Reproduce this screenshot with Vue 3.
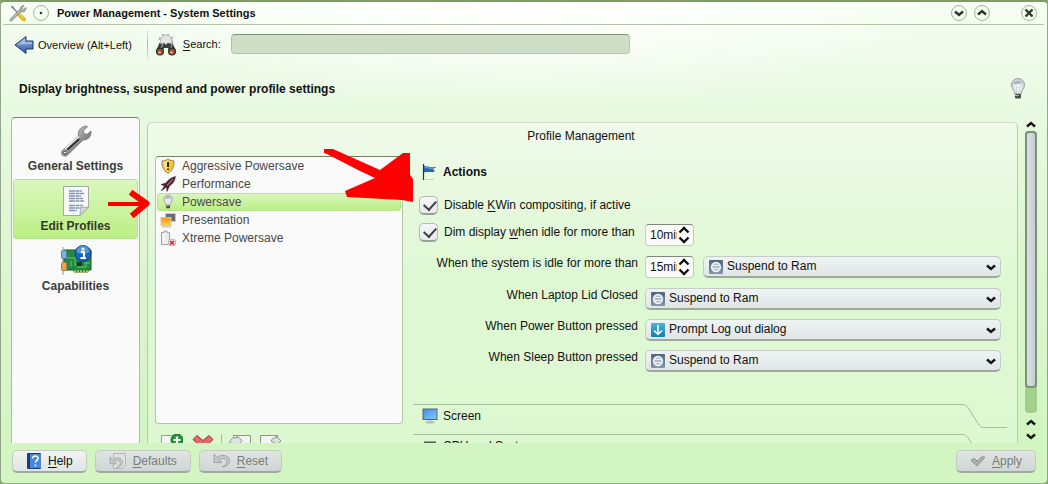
<script setup>
import { ref } from 'vue'

const search = ref('')
const pages = [
  { id: 'general', label: 'General Settings' },
  { id: 'profiles', label: 'Edit Profiles' },
  { id: 'caps', label: 'Capabilities' },
]
const page = ref('profiles')

const profiles = [
  { id: 'shield', label: 'Aggressive Powersave' },
  { id: 'rocket', label: 'Performance' },
  { id: 'bulb', label: 'Powersave' },
  { id: 'slides', label: 'Presentation' },
  { id: 'battery', label: 'Xtreme Powersave' },
]
const profile = ref('bulb')

const disableCompositing = ref(true)
const dimDisplay = ref(true)
const dimAfter = ref('10min')
const idleAfter = ref('15min')
const idleAction = ref('Suspend to Ram')
const actions = ['Suspend to Ram', 'Prompt Log out dialog', 'Do nothing']
const events = ref([
  { id: 'lid', label: 'When Laptop Lid Closed', action: 'Suspend to Ram' },
  { id: 'power', label: 'When Power Button pressed', action: 'Prompt Log out dialog' },
  { id: 'sleep', label: 'When Sleep Button pressed', action: 'Suspend to Ram' },
])
</script>

<template>
  <div class="window">
    <svg class="defs" width="0" height="0" aria-hidden="true">
      <defs>
        <linearGradient id="gBlue" x1="0" y1="0" x2="0" y2="1">
          <stop offset="0" stop-color="#9dbdea" /><stop offset="1" stop-color="#2a559f" />
        </linearGradient>
        <linearGradient id="gSteel" x1="0" y1="0" x2="1" y2="1">
          <stop offset="0" stop-color="#f4f4f4" /><stop offset="0.5" stop-color="#9a9a9a" /><stop offset="1" stop-color="#3c3c3c" />
        </linearGradient>
        <linearGradient id="gScreen" x1="0" y1="0" x2="1" y2="1">
          <stop offset="0" stop-color="#3d8fe0" /><stop offset="1" stop-color="#8cc8fb" />
        </linearGradient>
        <radialGradient id="gGlass" cx="0.5" cy="0.6" r="0.6">
          <stop offset="0" stop-color="#ffffff" /><stop offset="1" stop-color="#c3c9ce" />
        </radialGradient>
        <linearGradient id="gSleep" x1="0" y1="0" x2="0" y2="1">
          <stop offset="0" stop-color="#53647c" /><stop offset="1" stop-color="#8598aa" />
        </linearGradient>
        <linearGradient id="gLogout" x1="0" y1="0" x2="0" y2="1">
          <stop offset="0" stop-color="#4fb4d8" /><stop offset="1" stop-color="#0d7faf" />
        </linearGradient>
        <linearGradient id="gOrange" x1="0" y1="0" x2="0" y2="1">
          <stop offset="0" stop-color="#f29a0c" /><stop offset="1" stop-color="#ffcf4d" />
        </linearGradient>
        <symbol id="bulb" viewBox="0 0 16 24">
          <path d="M8 1.500C4 1.500 1.500 4.500 1.500 8c0 3.500 3 5 3.300 9h6.400C11.500 13 14.500 11.500 14.500 8 14.500 4.500 12 1.500 8 1.500z" fill="url(#gGlass)" stroke="#949b9f" stroke-width="0.900" />
          <path d="M3.500 6.500C5 3 11 3 12.500 6.500 10 5.500 6 8 3.500 6.500z" fill="#98a7b3" opacity="0.800" />
          <path d="M6.500 16V10l1.500 1 1.500-1v6" fill="none" stroke="#c4c9cc" stroke-width="0.600" />
          <rect x="5" y="17" width="6" height="4.500" rx="1" fill="#4b4b4b" />
          <path d="M5 18.500h4" stroke="#b8b8b8" />
        </symbol>
        <symbol id="undo" viewBox="0 0 18 16">
          <path d="M1 1v8.500h8L6 6.800c3-2 6.500-1.500 7.500 1 .8 2.200-.8 4.500-4.500 6.200 5-.5 8-3.500 7.500-7C15.800 2.500 9 .5 4 4.500z" fill="#c2c6c6" stroke="#9ca2a2" stroke-width="0.900" />
        </symbol>
        <symbol id="suspend" viewBox="0 0 14 14">
          <rect width="14" height="14" rx="1" fill="url(#gSleep)" />
          <circle cx="7" cy="7" r="4.300" fill="#94a6ba" stroke="#f1f5f8" stroke-width="1.700" />
          <path d="M4 5.500h6M4 8.500h6" stroke="#f1f5f8" stroke-width="1.300" />
        </symbol>
      </defs>
    </svg>

    <header class="titlebar">
      <svg class="app-icon" width="18" height="18" viewBox="0 0 18 18">
        <path d="M3 2.500 14 15" stroke="#8f9492" stroke-width="1.800" />
        <path d="M9 9.500l6 6" stroke="#e5b92d" stroke-width="4" stroke-linecap="round" />
        <path d="M10 9.500l5 5" stroke="#f8df74" stroke-width="1" />
        <path d="M2 16 12 6" stroke="#6c706e" stroke-width="2.800" stroke-linecap="round" />
        <path d="M2 16 12 6" stroke="#cfd3d1" stroke-width="1.200" stroke-linecap="round" />
        <path d="M11 5.500c0-2.500 2-4 4-4l-2 2.500 1.500 1.500 2.500-2c.5 2.500-1.500 4.500-4 4.500z" fill="#b9bdbb" stroke="#727674" stroke-width="0.700" />
        <path d="M1.500 1.500 4 2.500 5 5 3 4z" fill="#777c79" />
      </svg>
      <button class="round" aria-label="Window menu">
        <svg width="16" height="16" viewBox="0 0 16 16"><circle cx="8" cy="8" r="1.300" fill="#33402d" /></svg>
      </button>
      <h1 class="caption">Power Management - System Settings</h1>
      <div class="winbtns">
        <button class="round" aria-label="Minimize">
          <svg width="16" height="16" viewBox="0 0 16 16"><path d="M4 6.500 8 10l4-3.500" class="mark" /></svg>
        </button>
        <button class="round" aria-label="Maximize">
          <svg width="16" height="16" viewBox="0 0 16 16"><path d="M4 9.500 8 6l4 3.500" class="mark" /></svg>
        </button>
        <button class="round close" aria-label="Close">
          <svg width="16" height="16" viewBox="0 0 16 16"><path d="M4.500 4.500l7 7M11.500 4.500l-7 7" class="mark" /></svg>
        </button>
      </div>
    </header>

    <div class="toolbar">
      <button class="overview">
        <svg width="20" height="20" viewBox="0 0 20 20">
          <path d="M1 10 12 1.500V6h7v8h-7v4.500z" fill="url(#gBlue)" stroke="#1d3769" stroke-linejoin="round" />
          <path d="M3 9.700 11 3.500V7h7v2z" fill="#c5d9f5" opacity="0.500" />
        </svg>
        <span>Overview (Alt+Left)</span>
      </button>
      <span class="vsep"></span>
      <svg class="binoculars" width="22" height="22" viewBox="0 0 22 22">
        <circle cx="11" cy="6.500" r="6.500" fill="none" stroke="#b9b9b9" stroke-width="2" stroke-dasharray="2.800 2.300" />
        <circle cx="11" cy="6.500" r="5.500" fill="#e4e4e4" stroke="#b8b8b8" />
        <path d="M1 17 4.500 9h5L11 11l1.500-2h5l3.500 8v2h-6l-2-5h-4l-2 5H1z" fill="#3b3d3e" />
        <path d="M5 9.500h3l-2 5M14 9.500h3l-1 5" stroke="#9b9fa0" stroke-width="1.200" fill="none" />
        <circle cx="5" cy="17.500" r="4" fill="#292929" /><circle cx="17" cy="17.500" r="4" fill="#292929" />
        <circle cx="5" cy="17.700" r="2.900" fill="#a04a28" /><circle cx="17" cy="17.700" r="2.900" fill="#a04a28" />
        <circle cx="4.500" cy="18.300" r="1.400" fill="#dba083" /><circle cx="16.500" cy="18.300" r="1.400" fill="#dba083" />
      </svg>
      <label class="search-label" for="search"><u>S</u>earch:</label>
      <input id="search" v-model="search" class="search" type="text" />
    </div>

    <div class="heading">
      <h2>Display brightness, suspend and power profile settings</h2>
      <svg width="16" height="24"><use href="#bulb" /></svg>
    </div>

    <main class="content">
      <nav class="sidebar">
        <button v-for="p in pages" :key="p.id" class="page" :class="{ active: p.id === page }" @click="page = p.id">
          <svg v-if="p.id === 'general'" width="32" height="34" viewBox="0 0 32 34">
            <path d="M2 27 18.500 12c-1-4 1-8.500 7-10l2 .8-4.200 4 .7 3 3 .5L31 7c.5 5-2.500 9-8 9L7 31.500c-3.500 2-7-1.500-5-4.500z" fill="url(#gSteel)" stroke="#707070" stroke-width="0.800" />
            <path d="M8 25 18.500 15.500" stroke="#303030" stroke-width="2" stroke-linecap="round" />
            <path d="M5 25 19 12.500" stroke="#f7f7f7" stroke-width="1.200" />
            <circle cx="5" cy="28.500" r="1.500" fill="#fafafa" stroke="#444" />
          </svg>
          <svg v-else-if="p.id === 'profiles'" width="32" height="34" viewBox="0 0 32 34">
            <path d="M3.500 2.500h25V23L20 31.500H3.500z" fill="#f7f8fa" stroke="#a4aaa6" />
            <path d="M28.500 23 20 31.500l.5-8z" fill="#d4d8dc" stroke="#8d9398" stroke-width="0.700" />
            <path d="M9 7h13M9 9.500h15M9 12h12M9 14.500h14M9 17h15M9 21.500h14M9 24h11M9 26.500h8" stroke="#8394b2" stroke-width="1.400" stroke-dasharray="6 .6 4 .5" />
          </svg>
          <svg v-else width="32" height="34" viewBox="0 0 32 34">
            <path d="M3 3v28" stroke="#b5bab5" stroke-width="1.500" />
            <path d="M4 6h27v20h-3v2H14v-2H4z" fill="#238a42" stroke="#0f5a26" />
            <path d="M7 14h8v8M17 23h9v-5M24 19h6M11 17v5" stroke="#66c478" fill="none" />
            <path d="M14 27.500h14" stroke="#d9be55" stroke-width="2" stroke-dasharray="2 1" />
            <rect x="17" y="18" width="5" height="4" fill="#123f20" />
            <rect x="1.500" y="6.500" width="5" height="8" rx="1" fill="#74b5e4" stroke="#5c7e98" />
            <rect x="1.500" y="18.500" width="5" height="8" rx="1" fill="#f1a04a" stroke="#a77e52" />
            <circle cx="23" cy="9.500" r="8" fill="#1e66b8" stroke="#0d3f80" />
            <path d="M16.500 8a6.500 6.500 0 0 1 13 0c-4 2.500-9 2.500-13 0z" fill="#81b4e8" opacity="0.600" />
            <circle cx="23" cy="5" r="1.500" fill="#fff" />
            <path d="M21 8h3v6M20.500 14h5.500" stroke="#fff" stroke-width="1.900" fill="none" />
          </svg>
          <span>{{ p.label }}</span>
        </button>
      </nav>

      <section class="panel">
        <h3 class="panel-title">Profile Management</h3>
        <div class="columns">
          <div class="left">
            <ul class="profiles">
              <li v-for="p in profiles" :key="p.id">
                <button class="profile" :class="{ active: p.id === profile }" @click="profile = p.id">
                  <svg v-if="p.id === 'shield'" width="16" height="16" viewBox="0 0 16 16">
                    <path d="M8 1c2 1.300 4 1.800 6 1.800C14.500 9 12 13 8 15.200 4 13 1.500 9 2 2.800 4 2.800 6 2.300 8 1z" fill="#f7c62b" stroke="#8f8b7d" />
                    <path d="M8 2.500C6.500 3.500 5 4 3.500 4 3.500 8.500 5 11.500 8 13.500" fill="#fbe28a" />
                    <path d="M8 4v5M8 10.500V12" stroke="#30290f" stroke-width="2" />
                  </svg>
                  <svg v-else-if="p.id === 'rocket'" width="16" height="16" viewBox="0 0 16 16">
                    <path d="M15.500.5C11 1.500 8 4 6 7L1 8.500 4.500 10 1 15l5.500-4L7 15.500 9.500 10C12.500 8 15 5 15.500.5z" fill="#4c2228" stroke="#341b20" stroke-width="0.500" />
                    <path d="M13 3 7 9.500" stroke="#a7999c" stroke-width="1.100" />
                  </svg>
                  <svg v-else-if="p.id === 'bulb'" width="16" height="16" viewBox="0 0 16 24"><use href="#bulb" width="16" height="24" /></svg>
                  <svg v-else-if="p.id === 'slides'" width="16" height="16" viewBox="0 0 16 16">
                    <rect x="5.500" y="1.500" width="10" height="8" fill="#6a6d70" stroke="#c6c9c9" />
                    <rect x="1" y="5.500" width="10" height="8" fill="url(#gOrange)" stroke="#c9c4b5" />
                    <path d="M2 15h9" stroke="#b9b9b9" />
                  </svg>
                  <svg v-else width="16" height="16" viewBox="0 0 16 16">
                    <path d="M4 2.500V1h3v1.500h2.500v12h-8v-12z" fill="#eceeee" stroke="#9ea3a3" />
                    <path d="M3.500 4v9" stroke="#fff" stroke-width="1.500" />
                    <rect x="8.500" y="9.500" width="7" height="6" rx="1" fill="#eed9d9" stroke="#c8b8b8" />
                    <path d="M10 11l4 3.500M14 11l-4 3.500" stroke="#c9252c" stroke-width="1.600" />
                  </svg>
                  <span>{{ p.label }}</span>
                </button>
              </li>
            </ul>
            <div class="tools">
              <button class="tool" aria-label="New profile">
                <svg width="22" height="22" viewBox="0 0 22 22">
                  <path d="M.5 1.500h19v19H.5z" fill="#f2f5f2" stroke="#969d96" />
                  <circle cx="16" cy="6" r="6" fill="#21983a" stroke="#0c6a20" />
                  <path d="M16 2.500v7M12.500 6h7" stroke="#fff" stroke-width="2.200" />
                </svg>
              </button>
              <button class="tool" aria-label="Delete profile">
                <svg width="22" height="22" viewBox="0 0 22 22">
                  <path d="M5 1.500l6 5 6-5 4 4-6 5.500 6 5.500-4 4-6-5.500-6 5.500-4-4L7 11 1 5.500z" fill="#e06a6a" stroke="#b92424" />
                </svg>
              </button>
              <span class="tsep"></span>
              <button class="tool" aria-label="Import profiles">
                <svg width="22" height="22" viewBox="0 0 22 22">
                  <path d="M4.500 6V1.500h17v19h-17" fill="#f2f5f2" stroke="#8d968d" />
                  <path d="M.5 9C2 4 5 3 8 4V2l5 4.500-3 3.500z" fill="#e0e5e0" stroke="#8d968d" />
                </svg>
              </button>
              <button class="tool" aria-label="Export profiles">
                <svg width="22" height="22" viewBox="0 0 22 22">
                  <path d="M.5 20.500v-19h17v19z" fill="#f2f5f2" stroke="#8d968d" />
                  <path d="M11 7c1-3 3-3 5-3V2l5 5-4 3z" fill="#e0e5e0" stroke="#8d968d" />
                </svg>
              </button>
            </div>
          </div>

          <div class="right">
            <h4 class="section-head">
              <svg width="16" height="18" viewBox="0 0 16 18">
                <path d="M1.500 1v16" stroke="#2b3338" stroke-width="1.200" />
                <path d="M2 3c4 0 6 2 12.500.7L11 6l2 2.500C9 10 6 8 2 9.500z" fill="#2868ae" />
                <path d="M3 4.500c3 0 5 1.200 8 .7" stroke="#7db2e8" fill="none" />
                <path d="M3 16.500h9" stroke="#c4d2be" />
              </svg>
              <span>Actions</span>
            </h4>

            <label class="check">
              <input v-model="disableCompositing" type="checkbox" />
              <span>Disable <u>K</u>Win compositing, if active</span>
            </label>

            <div class="form">
              <label class="check">
                <input v-model="dimDisplay" type="checkbox" />
                <span>Dim display <u>w</u>hen idle for more than</span>
              </label>
              <div class="fields tall">
                <div class="spin">
                  <input v-model="dimAfter" type="text" aria-label="Dim display after" />
                  <svg width="12" height="18" viewBox="0 0 12 18"><path d="M1.500 6.500 6 2l4.500 4.500M1.500 11.500 6 16l4.500-4.500" class="arrow" /></svg>
                </div>
              </div>

              <label class="row-label" for="idle">When the system is idle for more than</label>
              <div class="fields tall">
                <div class="spin">
                  <input id="idle" v-model="idleAfter" type="text" />
                  <svg width="12" height="18" viewBox="0 0 12 18"><path d="M1.500 6.500 6 2l4.500 4.500M1.500 11.500 6 16l4.500-4.500" class="arrow" /></svg>
                </div>
                <div class="combo">
                  <svg class="combo-icon" width="14" height="14"><use href="#suspend" /></svg>
                  <select v-model="idleAction" aria-label="Idle action">
                    <option v-for="a in actions" :key="a">{{ a }}</option>
                  </select>
                  <svg class="combo-arrow" width="10" height="7" viewBox="0 0 10 7"><path d="M1 1.500l4 3.500 4-3.500" class="arrow" /></svg>
                </div>
              </div>

              <template v-for="e in events" :key="e.id">
                <label class="row-label" :for="e.id">{{ e.label }}</label>
                <div class="fields">
                  <div class="combo">
                    <svg v-if="e.action === 'Prompt Log out dialog'" class="combo-icon" width="14" height="14" viewBox="0 0 14 14">
                      <rect width="14" height="14" rx="1" fill="url(#gLogout)" />
                      <path d="M7 2v9M3 7.500l4 4 4-4" fill="none" stroke="#fff" stroke-width="1.500" />
                    </svg>
                    <svg v-else class="combo-icon" width="14" height="14"><use href="#suspend" /></svg>
                    <select :id="e.id" v-model="e.action">
                      <option v-for="a in actions" :key="a">{{ a }}</option>
                    </select>
                    <svg class="combo-arrow" width="10" height="7" viewBox="0 0 10 7"><path d="M1 1.500l4 3.500 4-3.500" class="arrow" /></svg>
                  </div>
                </div>
              </template>
            </div>

            <div class="tabs">
              <button class="tab">
                <span class="tab-face">
                  <svg width="16" height="16" viewBox="0 0 16 16">
                    <rect x="1" y="1" width="14" height="10.500" fill="url(#gScreen)" stroke="#566475" />
                    <path d="M6 12h4v1.500H6z" fill="#c9cdd0" /><ellipse cx="8" cy="14.300" rx="5" ry="1.300" fill="#b9bec1" />
                  </svg>
                  <span>Screen</span>
                </span>
                <svg class="tab-edge" width="52" height="30" viewBox="0 0 52 30"><path d="M0 .5h7c3 0 4.500 1 6 3l10 16c2 3 3 4 6 4h23" /></svg>
              </button>
              <button class="tab">
                <span class="tab-face">
                  <svg width="16" height="16" viewBox="0 0 16 16">
                    <rect x="2.500" y="4" width="11" height="10" fill="#6f7774" stroke="#454d49" />
                    <rect x="5" y="7" width="6" height="4" fill="#aab2ae" />
                  </svg>
                  <span>CPU and System</span>
                </span>
                <svg class="tab-edge" width="52" height="30" viewBox="0 0 52 30"><path d="M0 .5h7c3 0 4.500 1 6 3l10 16c2 3 3 4 6 4h23" /></svg>
              </button>
            </div>
          </div>
        </div>
      </section>

      <div class="scroll">
        <button class="step" aria-label="Scroll up"><svg width="10" height="7" viewBox="0 0 10 7"><path d="M1 5.500 5 2l4 3.500" class="arrow" /></svg></button>
        <div class="groove"><div class="thumb"></div></div>
        <button class="step low" aria-label="Scroll up one line"><svg width="10" height="7" viewBox="0 0 10 7"><path d="M1 5.500 5 2l4 3.500" class="arrow" /></svg></button>
        <button class="step" aria-label="Scroll down"><svg width="10" height="7" viewBox="0 0 10 7"><path d="M1 1.500 5 5l4-3.500" class="arrow" /></svg></button>
      </div>
    </main>

    <footer class="footer">
      <button class="btn">
        <svg width="16" height="16" viewBox="0 0 16 16">
          <rect x="1" y="0" width="14" height="16" rx="1" fill="#1c3c72" />
          <rect x="4" y="1" width="11" height="14" fill="#4b87d9" />
          <path d="M6.500 5.500c0-3.500 6-3 5.500 0-.2 1.800-2.500 2-2.500 4M9.500 11.500v1.700" fill="none" stroke="#fff" stroke-width="1.600" />
        </svg>
        <span><u>H</u>elp</span>
      </button>
      <button class="btn" disabled>
        <svg width="18" height="16" viewBox="0 0 18 16">
          <path d="M4.500.5h12v11l-3.500 4H4.500z" fill="#dde1e0" stroke="#b2b7b6" />
          <svg y="3" width="15" height="13"><use href="#undo" /></svg>
        </svg>
        <span><u>D</u>efaults</span>
      </button>
      <button class="btn" disabled>
        <svg width="18" height="16"><use href="#undo" /></svg>
        <span><u>R</u>eset</span>
      </button>
      <button class="btn apply" disabled>
        <svg width="16" height="12" viewBox="0 0 16 12">
          <path d="M1 5.500 4 3l3 3 6-5 2 1.500L7 11z" fill="#a9afad" stroke="#6f7574" stroke-dasharray="1 0.700" />
        </svg>
        <span><u>A</u>pply</span>
      </button>
    </footer>

    <svg class="pointer small" width="46" height="28" viewBox="0 0 46 28" aria-hidden="true">
      <path d="M1 14h38" stroke="#f00" stroke-width="4" />
      <path d="M26 4 39.500 13.500 27 24" fill="none" stroke="#f00" stroke-width="6" stroke-linecap="square" stroke-linejoin="round" />
    </svg>
    <svg class="pointer large" width="92" height="56" viewBox="0 0 92 56" aria-hidden="true">
      <path d="M0 0h9L56 21 79 4h7v22l3 4v23L78 51 23 48l-2-6 30-13L36 22 3 5 0 4z" fill="#f00" />
    </svg>
  </div>
</template>

<style>
body {
  margin: 0;
  background: #86a86c;
}
</style>

<style scoped>
* {
  box-sizing: border-box;
}
.window {
  position: relative;
  display: flex;
  flex-direction: column;
  height: 100vh;
  padding: 0 3px 0 2px;
  border: 1px solid #93a58b;
  border-top: 2px solid #7c9c62;
  border-bottom-color: #8fb07f;
  border-radius: 5px;
  background:
    radial-gradient(ellipse 420px 100px at 50% 0, #ffffff, #ffffff00),
    linear-gradient(#f7fef4, #e8f9e1 110px, #def7d2 230px, #d7f5c9 360px, #d2f5c1 440px);
  font: 12px/14px "Liberation Sans", Arial, sans-serif;
  color: #111;
}
.defs {
  position: absolute;
}
h1, h2, h3, h4, ul {
  margin: 0;
  padding: 0;
  list-style: none;
  font-size: 12px;
}
button {
  margin: 0;
  padding: 0;
  border: 0;
  background: none;
  color: inherit;
  font: inherit;
}
svg {
  flex: none;
  display: block;
}
u {
  text-underline-offset: 2px;
}
.mark, .arrow {
  fill: none;
  stroke: #2b3a25;
  stroke-width: 2.4;
}
.arrow {
  stroke: #111;
}
.titlebar {
  display: flex;
  align-items: center;
  height: 23px;
  padding: 0 7px 0 6px;
  border-bottom: 1px solid #b5c4a9;
}
.caption {
  margin-left: 8px;
  font-size: 11px;
}
.round {
  width: 16px;
  height: 16px;
  border: 1px solid #a4b59b;
  border-radius: 8px;
  background: #f4fbf0;
}
.round svg {
  margin: -1px;
}
.app-icon {
  margin-right: 6px;
}
.winbtns {
  display: flex;
  gap: 7px;
  margin-left: auto;
}
.close {
  margin-left: 24px;
}
.toolbar {
  display: flex;
  align-items: center;
  height: 40px;
  padding: 0 11px;
  font-size: 11px;
}
.overview {
  display: flex;
  align-items: center;
  gap: 4px;
}
.vsep {
  width: 1px;
  height: 30px;
  margin: 0 7px 0 15px;
  background: linear-gradient(#dfeadb, #a9bd9f, #dfeadb);
}
.search-label {
  margin: 0 10px 2px 6px;
}
.search {
  flex: 0 1 399px;
  height: 20px;
  margin-bottom: 3px;
  padding: 0 5px;
  border: 1px solid #b4c6aa;
  border-top: 1px solid #81927a;
  border-radius: 4px;
  background: #cfdfc7;
}
.heading {
  display: flex;
  justify-content: space-between;
  align-items: center;
  height: 52px;
  padding: 0 18px 4px 16px;
}
.content {
  display: flex;
  flex: 1;
  min-height: 0;
  overflow: hidden;
  padding: 0 7px 0 8px;
}
.sidebar {
  flex: none;
  width: 129px;
  padding: 1px;
  border: 1px solid #a9c29c;
  border-top-color: #71856a;
  border-bottom: 0;
  border-radius: 4px 4px 0 0;
  background: #fafafa;
}
.page {
  display: flex;
  flex-direction: column;
  align-items: center;
  width: 100%;
  height: 60px;
  padding-top: 4px;
  border: 1px solid transparent;
  border-radius: 3px;
  font-weight: bold;
  line-height: 16px;
  color: #3c3c3c;
}
.page.active {
  border-color: #b4e58c;
  background: linear-gradient(#daf8be, #bdee85);
  color: #303c26;
}
.panel {
  flex: 1;
  min-width: 0;
  min-height: 440px;
  margin: 5px 7px 0;
  padding: 6px 10px 0 7px;
  border: 1px solid #b5ccab;
  border-top-color: #cfe0c8;
  border-radius: 5px 5px 0 0;
  background: linear-gradient(#f0fbeb, #e5f8dc 90px, #def8d3 160px, #dcf8d0);
}
.panel-title {
  font-weight: normal;
  text-align: center;
}
.columns {
  display: flex;
  gap: 10px;
  margin-top: 13px;
}
.profiles {
  height: 268px;
  padding: 0 1px;
  border: 1px solid #b1c6a7;
  border-top-color: #6f8367;
  border-radius: 4px;
  background: #fafafa;
}
.left {
  flex: none;
  width: 248px;
}
.profile {
  display: flex;
  align-items: center;
  gap: 6px;
  width: 100%;
  height: 18px;
  padding-left: 2px;
  border: 1px solid transparent;
  border-radius: 3px;
  color: #484848;
}
.profile.active {
  border-color: #b5e68d;
  background: linear-gradient(#d9f7bd, #bdee85);
}
.tools {
  display: flex;
  gap: 9px;
  padding: 10px 6px 0;
}
.tsep {
  width: 1px;
  margin: 0 -2px;
  background: #a9bca0;
}
.right {
  flex: 1;
  min-width: 0;
}
.section-head {
  display: flex;
  align-items: center;
  gap: 5px;
  height: 18px;
  margin: 7px 0 15px 9px;
}
.check {
  display: flex;
  align-items: center;
  gap: 6px;
  height: 19px;
  margin-left: 6px;
}
.check span {
  padding-bottom: 2px;
}
.check input {
  appearance: none;
  flex: none;
  width: 19px;
  height: 19px;
  margin: 0;
  border: 1px solid #b5bab3;
  border-bottom: 2px solid #98a195;
  border-radius: 5px;
  background: linear-gradient(#f6f6f8, #e7e9ec);
}
.check input:checked::before {
  content: "";
  display: block;
  width: 6px;
  height: 10px;
  margin: 1px 0 0 6px;
  border: solid #3d3d45;
  border-width: 0 2px 2px 0;
  transform: rotate(42deg);
}
.form {
  display: grid;
  grid-template-columns: 225px 1fr;
  gap: 9px 7px;
  margin: 9px 6px 0 0;
}
.form .check {
  margin-top: -1px;
}
.row-label {
  text-align: right;
}
.fields {
  display: flex;
  gap: 9px;
}
.tall {
  height: 23px;
}
.spin {
  display: flex;
  align-items: center;
  gap: 1px;
  width: 49px;
  height: 22px;
  padding: 0 3px 0 4px;
  border: 1px solid #c4cfbf;
  border-top-color: #7d8879;
  border-radius: 4px;
  background: #fbfbfb;
}
.spin input {
  flex: 1;
  width: 0;
  min-width: 0;
  margin: 0;
  padding: 0;
  border: 0;
  background: none;
  font: inherit;
  color: inherit;
}
.combo {
  position: relative;
  flex: 1;
  min-width: 0;
}
.combo select {
  appearance: none;
  display: block;
  width: 100%;
  height: 22px;
  padding: 0 24px 1px 23px;
  border: 1px solid #c3cdc5;
  border-bottom: 2px solid #9da8a0;
  border-radius: 5px;
  background: linear-gradient(#eef3f3, #dfe6e5);
  font: inherit;
  color: #111;
}
.combo-icon {
  position: absolute;
  top: 4px;
  left: 6px;
}
.combo-arrow {
  position: absolute;
  top: 8px;
  right: 5px;
}
.tabs {
  margin-top: 32px;
}
.tab {
  display: flex;
  width: 100%;
  height: 30px;
  text-align: left;
}
.tab-face {
  display: flex;
  flex: 1;
  align-items: center;
  gap: 5px;
  height: 23px;
  padding-left: 9px;
  border-top: 1px solid #a3bd98;
}
.tab-edge path {
  fill: none;
  stroke: #a3bd98;
}
.scroll {
  display: flex;
  flex: none;
  flex-direction: column;
  align-items: center;
  width: 12px;
}
.step {
  display: grid;
  place-items: center;
  width: 12px;
  height: 14px;
}
.step.low {
  margin-top: 2px;
}
.groove {
  flex: 1;
  width: 12px;
  border-radius: 4px;
  background: #a1d08a;
}
.thumb {
  height: 91%;
  border: 2px solid #7b927a;
  border-radius: 4px;
  background: linear-gradient(90deg, #dce2e6, #c5cdd1);
}
.footer {
  display: flex;
  flex: none;
  gap: 8px;
  height: 40px;
  padding: 7px 8px 0 9px;
}
.btn {
  display: flex;
  align-items: center;
  gap: 6px;
  height: 23px;
  padding: 0 13px 1px;
  border: 1px solid #c3ccc3;
  border-bottom: 2px solid #9faa9b;
  border-radius: 5px;
  background: linear-gradient(#f0f4f3, #dfe5e4);
}
.btn:disabled {
  background: linear-gradient(#e0e5e3, #cfd6d4);
  color: #777d7a;
}
.apply {
  margin-left: auto;
}
.pointer {
  position: absolute;
  pointer-events: none;
}
.small {
  top: 188px;
  left: 106px;
}
.large {
  top: 147px;
  left: 323px;
}
</style>
